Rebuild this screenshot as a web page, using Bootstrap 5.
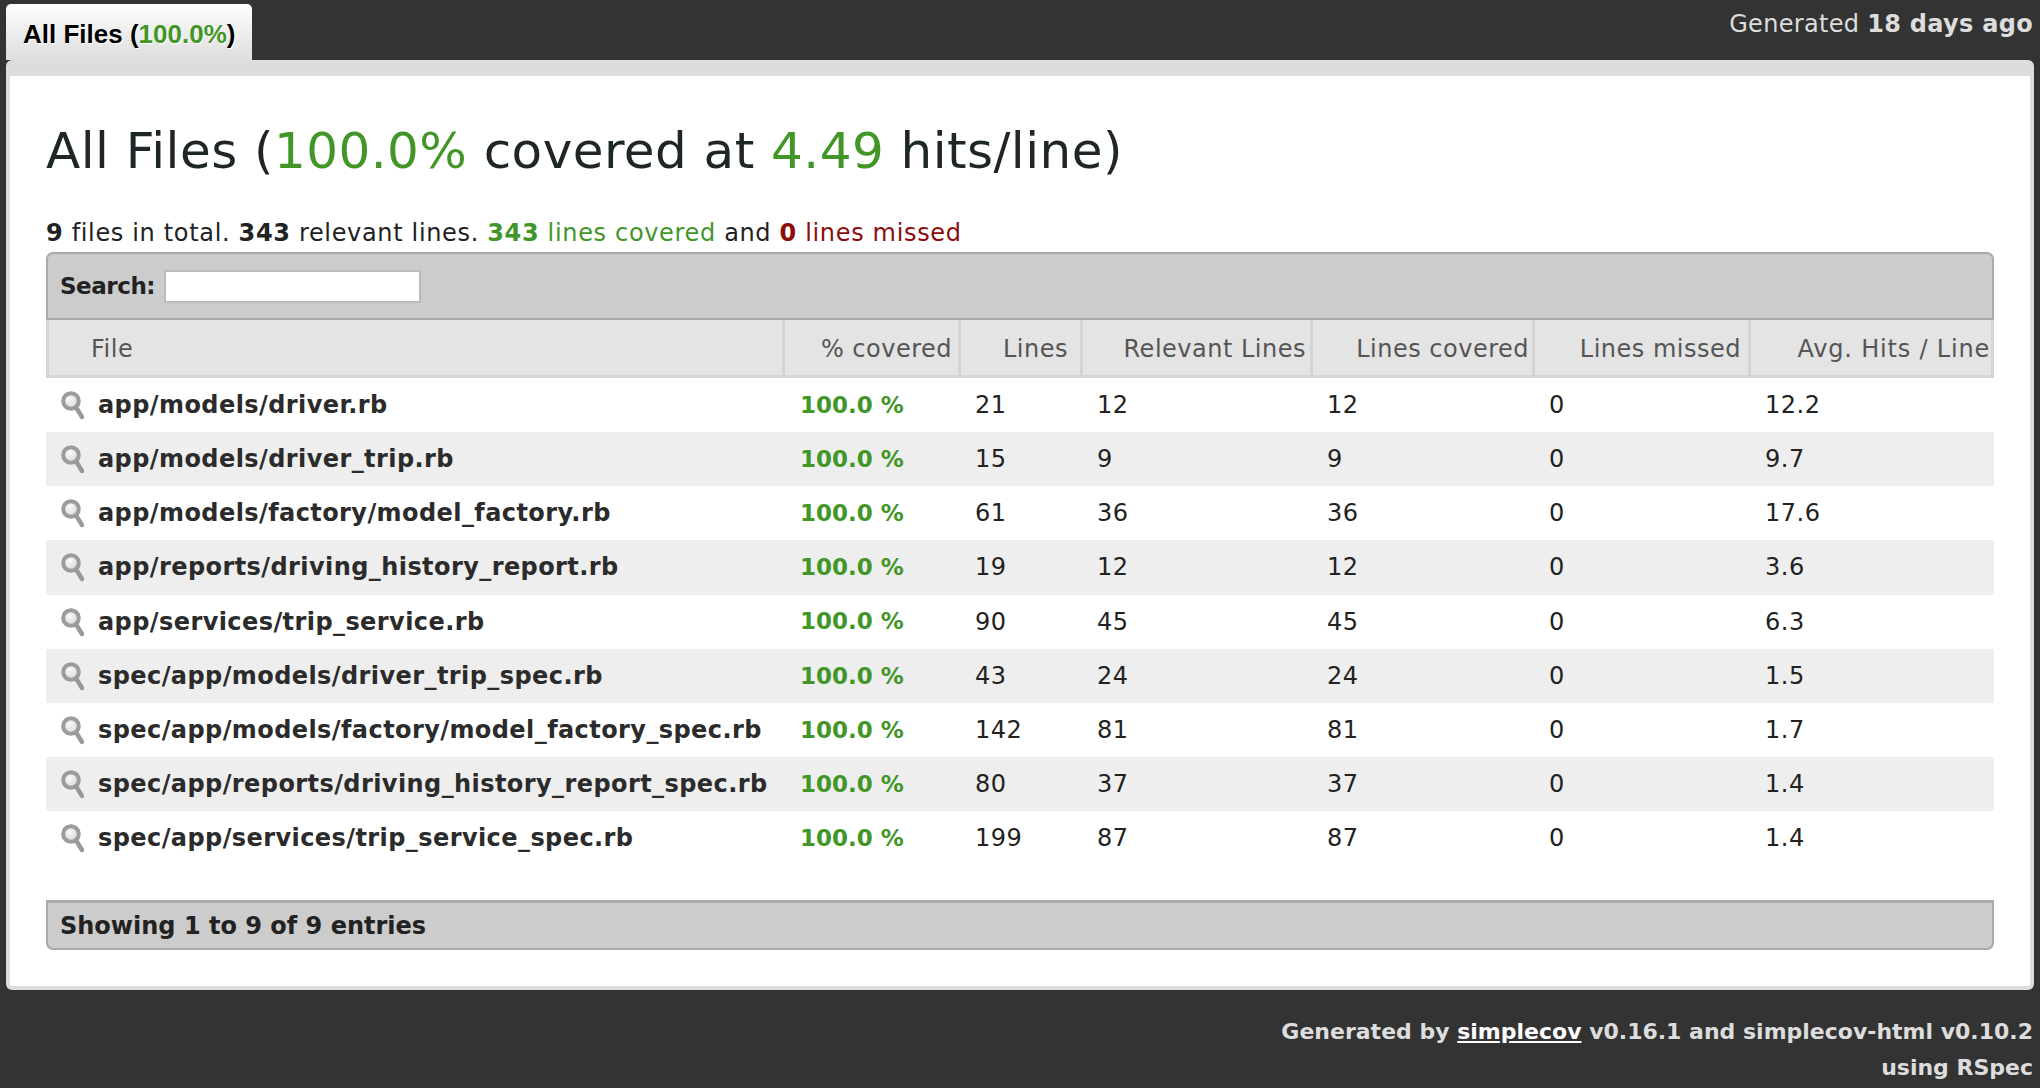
<!DOCTYPE html>
<html lang="en">
<head>
<meta charset="utf-8">
<title>Code coverage</title>
<link rel="stylesheet" href="https://cdn.jsdelivr.net/npm/bootstrap@5.3.0/dist/css/bootstrap.min.css">
<style>
html,body{height:100%}
body{background:#333;font-family:"DejaVu Sans",sans-serif;font-size:24px;color:#222;overflow:hidden;margin:0}
.cov-top{height:60px;padding:4px 7px 0 6px}
.cov-tab{width:246px;height:56px;background:linear-gradient(#fff,#ddd);border-radius:5px 5px 0 0;font-family:"Liberation Sans",sans-serif;font-weight:700;font-size:26px;color:#000;text-shadow:1px 1px 0 #fff;padding:16px 0 0 17px;line-height:28px;white-space:nowrap}
.cov-stamp{line-height:30px;color:#ddd;font-size:24px;margin-top:5px;letter-spacing:.3px}
.cov-panel{margin:0 6px;height:930px;background:#fff;border:4px solid #ddd;border-top-width:16px;border-radius:6px;padding:0 36px;overflow:hidden}
.cov-title{font-family:"DejaVu Sans",sans-serif;font-weight:400;font-size:50px;line-height:60px;margin:45px 0 0;color:#1f2628;letter-spacing:.45px;white-space:nowrap}
.cov-sum{line-height:30px;margin:37px 0 0;height:30px;letter-spacing:.66px;white-space:nowrap}
.cov-g{color:#429628}
.cov-r{color:#8b0d0d}
.cov-bar{background:#ccc;border:2px solid #aaa;font-weight:700;padding:0 12px;display:flex;align-items:center}
.cov-bar-top{height:68px;border-radius:7px 7px 0 0;margin-top:4px;font-size:23px;letter-spacing:-.45px}
.cov-bar-bot{height:50px;border-top-width:3px;border-radius:0 0 7px 7px;margin-top:35px}
.cov-input{width:257px;height:33px;border:2px solid #bbb;background:#fff;margin-left:9px}
table.cov-table{table-layout:fixed;width:100%;margin:0;border-collapse:separate;border-spacing:0;letter-spacing:.5px}
.cov-table>thead>tr>th{height:58px;padding:3px 6px 0 0;background:#e4e4e4;color:#555;font-weight:400;text-align:right;vertical-align:middle;border:0;border-right:3px solid #d4d4d4;border-bottom:3px solid #d4d4d4;white-space:nowrap;box-shadow:none}
.cov-table>thead>tr>th:first-child{text-align:left;padding-left:42px;border-left:3px solid #d4d4d4}
.cov-table>thead>tr>th:nth-child(3){padding-right:12px}
.cov-table>thead>tr>th:nth-child(4){padding-right:4px}
.cov-table>thead>tr>th:nth-child(5){padding-right:3px}
.cov-table>thead>tr>th:nth-child(6){padding-right:7px}
.cov-table>thead>tr>th:last-child{border-right-color:#d4d4d4;padding-right:1px;letter-spacing:.8px}
.cov-table>tbody>tr>td{height:54.15px;padding:0 0 0 14px;border:0;vertical-align:middle;color:#222;background:transparent;box-shadow:none;white-space:nowrap}
.cov-table>tbody>tr:nth-child(even)>td{background:#eee}
.cov-table>tbody>tr>td:first-child{padding-left:14px;font-weight:700;color:#2b2b2b;letter-spacing:.42px}
.cov-table>tbody>tr>td.cov-pct{font-weight:700;color:#429628;font-size:23px;letter-spacing:0;padding-left:15px}
.cov-file{display:flex;align-items:center;gap:14px}
.cov-file svg{flex:none}
.cov-foot{color:#ddd;font-weight:700;font-size:22px;text-align:right;padding:24px 7px 0 0;line-height:36px}
.cov-foot a{color:#fff}
</style>
</head>
<body>
<div class="cov-top d-flex justify-content-between align-items-start">
  <div class="cov-tab">All Files (<span class="cov-g">100.0%</span>)</div>
  <div class="cov-stamp">Generated <b>18 days ago</b></div>
</div>
<svg width="0" height="0" class="d-block">
  <defs>
    <filter id="cov-soft"><feGaussianBlur stdDeviation=".6"/></filter>
    <radialGradient id="cov-glass" cx=".4" cy=".35" r=".7"><stop offset="0" stop-color="#f8f8f8"/><stop offset="1" stop-color="#d8d8d8"/></radialGradient>
    <symbol id="cov-mag" viewBox="0 0 24 30">
      <g filter="url(#cov-soft)">
        <circle cx="11" cy="11" r="7.8" fill="url(#cov-glass)" stroke="#9c9c9c" stroke-width="4"/>
        <path d="M16.5 18 L22 27" stroke="#999" stroke-width="4.4" stroke-linecap="round" fill="none"/>
      </g>
    </symbol>
  </defs>
</svg>
<div class="cov-panel">
  <h1 class="cov-title">All Files (<span class="cov-g">100.0%</span> covered at <span class="cov-g">4.49</span> hits/line)</h1>
  <div class="cov-sum"><b>9</b> files in total. <b>343</b> relevant lines. <span class="cov-g"><b>343</b> lines covered</span> and <span class="cov-r"><b>0</b> lines missed</span></div>
  <div class="cov-bar cov-bar-top"><label>Search:</label><input class="cov-input" type="text" aria-label="Search"></div>
  <table class="table cov-table">
    <colgroup><col style="width:739px"><col style="width:176px"><col style="width:122px"><col style="width:230px"><col style="width:222px"><col style="width:216px"><col style="width:243px"></colgroup>
    <thead><tr><th>File</th><th>% covered</th><th>Lines</th><th>Relevant Lines</th><th>Lines covered</th><th>Lines missed</th><th>Avg. Hits / Line</th></tr></thead>
    <tbody>
      <tr><td><div class="cov-file"><svg width="24" height="30"><use href="#cov-mag"/></svg>app/models/driver.rb</div></td><td class="cov-pct">100.0 %</td><td>21</td><td>12</td><td>12</td><td>0</td><td>12.2</td></tr>
      <tr><td><div class="cov-file"><svg width="24" height="30"><use href="#cov-mag"/></svg>app/models/driver_trip.rb</div></td><td class="cov-pct">100.0 %</td><td>15</td><td>9</td><td>9</td><td>0</td><td>9.7</td></tr>
      <tr><td><div class="cov-file"><svg width="24" height="30"><use href="#cov-mag"/></svg>app/models/factory/model_factory.rb</div></td><td class="cov-pct">100.0 %</td><td>61</td><td>36</td><td>36</td><td>0</td><td>17.6</td></tr>
      <tr><td><div class="cov-file"><svg width="24" height="30"><use href="#cov-mag"/></svg>app/reports/driving_history_report.rb</div></td><td class="cov-pct">100.0 %</td><td>19</td><td>12</td><td>12</td><td>0</td><td>3.6</td></tr>
      <tr><td><div class="cov-file"><svg width="24" height="30"><use href="#cov-mag"/></svg>app/services/trip_service.rb</div></td><td class="cov-pct">100.0 %</td><td>90</td><td>45</td><td>45</td><td>0</td><td>6.3</td></tr>
      <tr><td><div class="cov-file"><svg width="24" height="30"><use href="#cov-mag"/></svg>spec/app/models/driver_trip_spec.rb</div></td><td class="cov-pct">100.0 %</td><td>43</td><td>24</td><td>24</td><td>0</td><td>1.5</td></tr>
      <tr><td><div class="cov-file"><svg width="24" height="30"><use href="#cov-mag"/></svg>spec/app/models/factory/model_factory_spec.rb</div></td><td class="cov-pct">100.0 %</td><td>142</td><td>81</td><td>81</td><td>0</td><td>1.7</td></tr>
      <tr><td><div class="cov-file"><svg width="24" height="30"><use href="#cov-mag"/></svg>spec/app/reports/driving_history_report_spec.rb</div></td><td class="cov-pct">100.0 %</td><td>80</td><td>37</td><td>37</td><td>0</td><td>1.4</td></tr>
      <tr><td><div class="cov-file"><svg width="24" height="30"><use href="#cov-mag"/></svg>spec/app/services/trip_service_spec.rb</div></td><td class="cov-pct">100.0 %</td><td>199</td><td>87</td><td>87</td><td>0</td><td>1.4</td></tr>
    </tbody>
  </table>
  <div class="cov-bar cov-bar-bot">Showing 1 to 9 of 9 entries</div>
</div>
<div class="cov-foot">Generated by <a href="#">simplecov</a> v0.16.1 and simplecov-html v0.10.2<br>using RSpec</div>
<script src="https://cdn.jsdelivr.net/npm/bootstrap@5.3.0/dist/js/bootstrap.bundle.min.js"></script>
</body>
</html>
